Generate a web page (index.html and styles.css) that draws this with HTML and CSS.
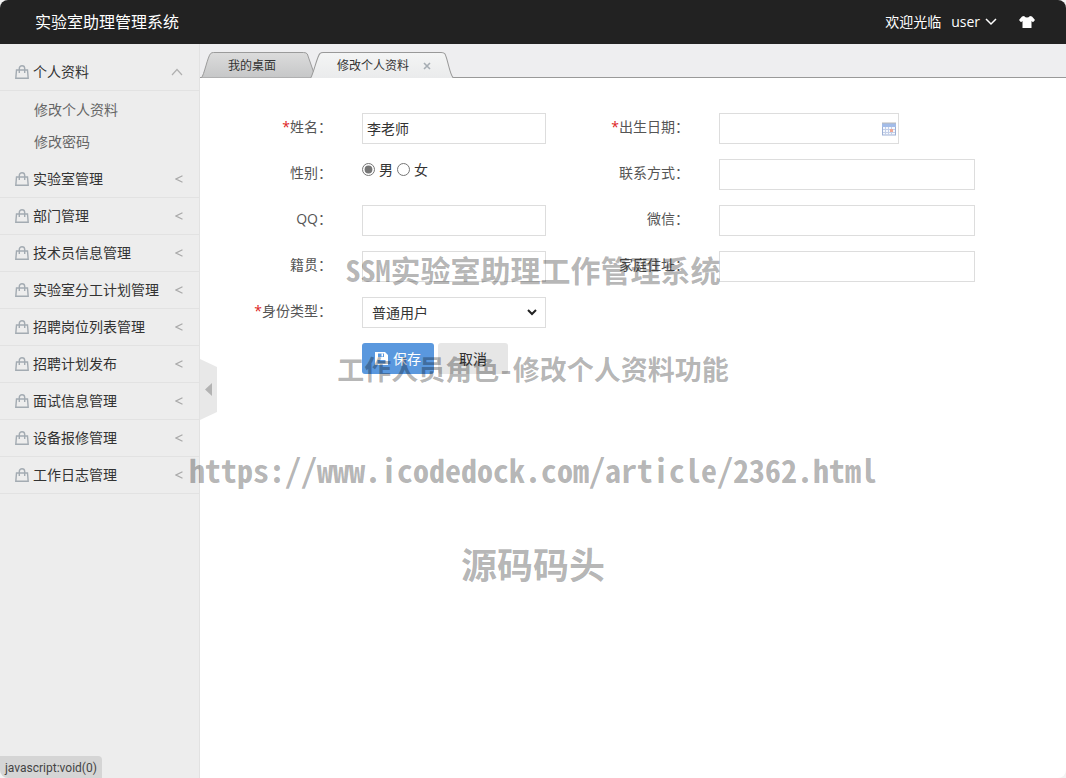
FILE: index.html
```
<!DOCTYPE html>
<html lang="zh-CN">
<head>
<meta charset="utf-8">
<title>实验室助理管理系统</title>
<link rel="stylesheet" href="styles.css">
</head>
<body>
<svg class="defs" aria-hidden="true">
  <defs>
    <linearGradient id="tab-idle" x1="0" y1="0" x2="0" y2="1"><stop offset="0" stop-color="#dcdcdc"/><stop offset="1" stop-color="#c6c7c8"/></linearGradient>
    <linearGradient id="tab-active" x1="0" y1="0" x2="0" y2="1"><stop offset="0" stop-color="#f4f5f5"/><stop offset="1" stop-color="#eaebec"/></linearGradient>
    <symbol id="bag" viewBox="0 0 14 14"><path d="M1.500 5h11l.7 8.300H.8zM4.300 8V3.500a2.700 2.700 0 0 1 5.400 0V8" fill="none" stroke="#a3abb2" stroke-width="1.400"/></symbol>
    <symbol id="chev" viewBox="0 0 8 8"><path d="M7.500 .8L1 4l6.500 3.200" fill="none" stroke="#a9a9a9" stroke-width="1.2"/></symbol>
  </defs>
</svg>
<div class="app">
  <header class="header">
    <h1 class="brand">实验室助理管理系统</h1>
    <div class="userbar">
      <span>欢迎光临</span>
      <button class="user" type="button">user
        <svg width="12" height="8" viewBox="0 0 12 8"><path d="M1 1l5 5 5-5" fill="none" stroke="#fff" stroke-width="1.500"/></svg>
      </button>
      <button class="skin" type="button" aria-label="换肤">
        <svg width="16" height="12" viewBox="0 0 16 12"><path d="M5 0Q8 3 11 0L13 .5 16 4l-2 2.200L12.500 5v7h-9V5L2 6.200 0 4 3 .5z" fill="#fff"/></svg>
      </button>
    </div>
  </header>
  <div class="body">
    <nav class="sidebar">
      <a class="item" href="#"><svg class="bag"><use href="#bag"/></svg><span>个人资料</span><svg class="up" viewBox="0 0 12 8"><path d="M1 7l5-5.500L11 7" fill="none" stroke="#b0b0b0" stroke-width="1.200"/></svg></a>
      <div class="sub">
        <a href="#">修改个人资料</a>
        <a href="#">修改密码</a>
      </div>
      <a class="item" href="#"><svg class="bag"><use href="#bag"/></svg><span>实验室管理</span><svg class="chev"><use href="#chev"/></svg></a>
      <a class="item" href="#"><svg class="bag"><use href="#bag"/></svg><span>部门管理</span><svg class="chev"><use href="#chev"/></svg></a>
      <a class="item" href="#"><svg class="bag"><use href="#bag"/></svg><span>技术员信息管理</span><svg class="chev"><use href="#chev"/></svg></a>
      <a class="item" href="#"><svg class="bag"><use href="#bag"/></svg><span>实验室分工计划管理</span><svg class="chev"><use href="#chev"/></svg></a>
      <a class="item" href="#"><svg class="bag"><use href="#bag"/></svg><span>招聘岗位列表管理</span><svg class="chev"><use href="#chev"/></svg></a>
      <a class="item" href="#"><svg class="bag"><use href="#bag"/></svg><span>招聘计划发布</span><svg class="chev"><use href="#chev"/></svg></a>
      <a class="item" href="#"><svg class="bag"><use href="#bag"/></svg><span>面试信息管理</span><svg class="chev"><use href="#chev"/></svg></a>
      <a class="item" href="#"><svg class="bag"><use href="#bag"/></svg><span>设备报修管理</span><svg class="chev"><use href="#chev"/></svg></a>
      <a class="item" href="#"><svg class="bag"><use href="#bag"/></svg><span>工作日志管理</span><svg class="chev"><use href="#chev"/></svg></a>
    </nav>
    <main class="main">
      <div class="tabs">
        <a class="tab home" href="#">
          <svg class="tab-bg" viewBox="0 0 119 26" preserveAspectRatio="none"><path d="M.5 25.500C3 24 7 4 10 1.500Q11 .5 13 .5H106Q109 .5 110 2L118.500 25.500" fill="url(#tab-idle)" stroke="#999"/></svg>
          <span>我的桌面</span>
        </a>
        <div class="tab current">
          <svg class="tab-bg" viewBox="0 0 144 26" preserveAspectRatio="none"><path d="M.5 26C3 24 7 4 10 1.500Q11 .5 13 .5H131Q134 .5 135 2C138 8 140 24 143.500 26" fill="url(#tab-active)" stroke="#999"/></svg>
          <span>修改个人资料</span>
          <button class="close" type="button" aria-label="关闭"><svg width="8" height="8" viewBox="0 0 8 8"><path d="M1 1l6 6M7 1L1 7" stroke="#a6adb3" stroke-width="1.600"/></svg></button>
        </div>
      </div>
      <form class="form">
        <label for="name"><i>*</i>姓名：</label>
        <input class="text" id="name" type="text" value="李老师">
        <label for="birth"><i>*</i>出生日期：</label>
        <div class="date">
          <input class="text" id="birth" type="text">
          <svg class="cal" width="14" height="14" viewBox="0 0 14 14"><rect x=".5" y="1.500" width="13" height="11.500" fill="#f5f8fd" stroke="#9db0d4"/><path d="M0 1h14v4H0z" fill="#a3bce8"/><path d="M0 1h14" stroke="#b9b9b9"/><path d="M1 7.500h12M1 10.500h12M3.500 5v8M6.500 5v8M9.500 5v8" stroke="#c3cfe8"/><path d="M8 7h3v3H8z" fill="#efa896"/></svg>
        </div>

        <span class="label" id="sex">性别：</span>
        <div class="radios" role="radiogroup" aria-labelledby="sex">
          <label><input type="radio" name="sex" checked>男</label>
          <label><input type="radio" name="sex">女</label>
        </div>
        <label for="phone">联系方式：</label>
        <input class="text" id="phone" type="text">

        <label for="qq">QQ：</label>
        <input class="text" id="qq" type="text">
        <label for="wechat">微信：</label>
        <input class="text" id="wechat" type="text">

        <label for="origin">籍贯：</label>
        <input class="text" id="origin" type="text">
        <label for="address">家庭住址：</label>
        <input class="text" id="address" type="text">

        <label for="role"><i>*</i>身份类型：</label>
        <div class="select">
          <select id="role"><option>普通用户</option></select>
          <svg width="10" height="7" viewBox="0 0 10 7"><path d="M1 1l4 4 4-4" fill="none" stroke="#222" stroke-width="2"/></svg>
        </div>
        <div class="actions">
          <button class="btn save" type="submit"><svg width="13" height="13" viewBox="0 0 13 13"><path fill-rule="evenodd" d="M0 0h10l3 3v10H0zM3 1.500V5h6V1.500zM2.500 8v3.500h8V8z" fill="#fff"/><path d="M6.500 1.500h1.500v3H6.500z" fill="#fff"/></svg>保存</button>
          <button class="btn" type="button">取消</button>
        </div>
      </form>
      <button class="toggle" type="button" aria-label="收起菜单">
        <svg width="17" height="61" viewBox="0 0 17 61"><path d="M0 0l17 8v45L0 61z" fill="#e8e8e8"/><path d="M12 24v13l-7-6.500z" fill="#b3b3b3"/></svg>
      </button>
    </main>
  </div>
  <div class="status">javascript:void(0)</div>
  <div class="watermark">
    <p class="line-a">SSM实验室助理工作管理系统</p>
    <p class="line-b">工作人员角色-修改个人资料功能</p>
    <p class="line-c">https://www.icodedock.com/article/2362.html</p>
    <p class="line-d">源码码头</p>
  </div>
</div>
</body>
</html>
```
FILE: styles.css
```
* { box-sizing: border-box; }
body {
  margin: 0;
  background: #f3f3f3;
  color: #333;
  font: 14px/20px "Open Sans", "Noto Sans CJK SC", sans-serif;
}
a { color: inherit; text-decoration: none; }
button, input, select { font: inherit; color: inherit; }
button { border: 0; padding: 0; background: none; cursor: pointer; }
svg { display: block; flex: none; }
.defs { position: absolute; width: 0; height: 0; }

.app {
  position: relative;
  display: flex;
  flex-direction: column;
  min-height: 100vh;
  overflow: hidden;
  border-radius: 8px;
  background: #fff;
}
.header {
  display: flex;
  align-items: center;
  justify-content: space-between;
  height: 44px;
  padding: 0 31px 0 35px;
  background: #222;
  color: #fff;
}
.brand { margin: 0; font-size: 16px; font-weight: 400; }
.userbar { display: flex; align-items: center; gap: 10px; }
.user { display: flex; align-items: center; gap: 5px; }
.skin { margin-left: 12px; }

.body { display: flex; flex: 1; }
.sidebar {
  flex: none;
  width: 200px;
  padding-top: 10px;
  border-right: 1px solid #e2e2e2;
  background: #ededed;
}
.item {
  display: flex;
  align-items: center;
  gap: 4px;
  height: 37px;
  padding: 0 16px 0 15px;
  border-bottom: 1px solid #e2e2e2;
}
.item span { flex: 1; }
.bag { width: 14px; height: 14px; }
.chev { width: 8px; height: 8px; }
.up { width: 12px; height: 8px; }
.sub { padding: 3px 0 3px 34px; color: #666; }
.sub a { display: block; line-height: 32px; }

.main { position: relative; flex: 1; min-width: 0; }
.tabs {
  display: flex;
  height: 34px;
  padding: 8px 0 0 1px;
  border-bottom: 1px solid #999;
  background: #eeeef0;
}
.tab {
  position: relative;
  display: flex;
  align-items: center;
  height: 26px;
  padding: 2px 40px 0 27px;
  font-size: 12px;
}
.tab span { position: relative; }
.tab-bg { position: absolute; inset: 0; width: 100%; height: 100%; }
.current { margin-left: -6px; padding: 2px 23px 0 27px; gap: 14px; }
.close { position: relative; }

.form {
  display: grid;
  grid-template-columns: 132fr 184fr 113fr 256fr;
  gap: 15px 30px;
  padding: 35px 91px 0 0;
}
.form > label, .label {
  color: #555;
  line-height: 28px;
  text-align: right;
  white-space: nowrap;
}
.form i { color: #d22; font-style: normal; }
.text, .select select {
  width: 100%;
  min-width: 0;
  height: 31px;
  border: 1px solid #ddd;
  border-radius: 0;
  background: #fff;
  padding: 0 4px 2px;
}
.date { position: relative; width: 180px; }
.cal { position: absolute; right: 3px; top: 9px; }
.radios { display: flex; gap: 4px; }
.radios label { display: flex; align-items: center; gap: 4px; height: 21px; }
.radios input { width: 13px; height: 13px; margin: 0; accent-color: #767676; }
.select { position: relative; }
.select select { appearance: none; padding: 0 9px; }
.select svg { position: absolute; right: 9px; top: 12px; pointer-events: none; }
.actions { grid-column: 2 / -1; display: flex; gap: 4px; }
.btn {
  display: flex;
  align-items: center;
  justify-content: center;
  gap: 5px;
  height: 31px;
  padding: 0 21px;
  border-radius: 3px;
  background: #e6e6e6;
}
.save { padding: 0 13px; background: #5a98de; color: #fff; }
.toggle { position: absolute; left: 0; top: 315px; }

.status {
  position: absolute;
  left: 0;
  bottom: 0;
  padding: 2px 5px 0;
  border-radius: 0 4px 0 0;
  background: #d5d5d5;
  color: #444;
  font-family: Roboto, sans-serif;
  font-size: 12px;
}
.watermark {
  position: absolute;
  inset: 0;
  padding-top: 249px;
  color: rgba(0, 0, 0, .3);
  font-family: "Noto Sans Mono CJK SC", "Noto Sans CJK SC", monospace;
  font-weight: 700;
  line-height: 40px;
  text-align: center;
  white-space: nowrap;
  pointer-events: none;
}
.watermark p { margin: 0 0 60px; }
.line-a { font-size: 30px; }
.line-b { font-size: 27px; }
.line-c { font-size: 32px; }
.watermark .line-c { margin-bottom: 54px; }
.line-d { font-size: 36px; }
```
